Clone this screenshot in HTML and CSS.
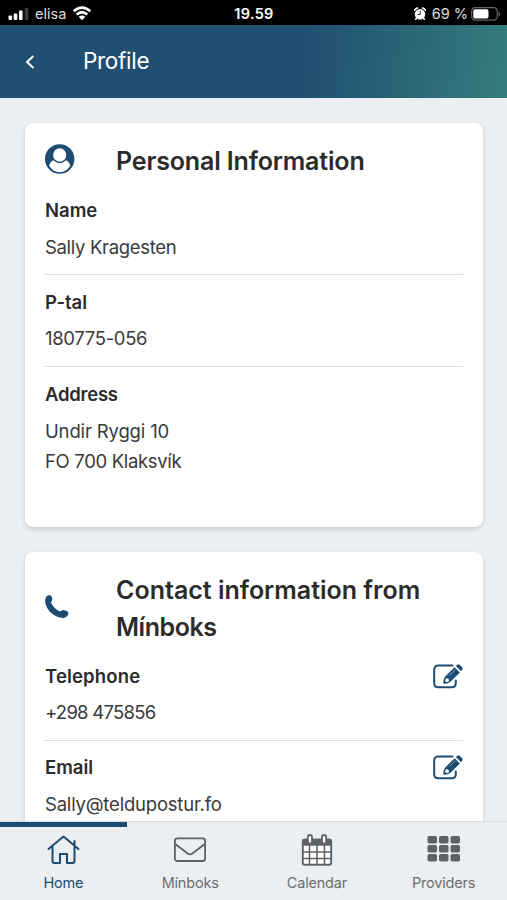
FILE: index.html
```html
<!DOCTYPE html>
<html lang="en">
<head>
<meta charset="utf-8">
<meta name="viewport" content="width=device-width">
<title>Profile</title>
<link rel="stylesheet" href="styles.css">
</head>
<body>
<div class="app">
  <div class="status">
    <div class="status-left">
      <svg class="signal" width="22" height="14" viewBox="0 0 22 14"><rect x="0.5" y="8.5" width="3.6" height="4.5" rx="1" fill="#fff"/><rect x="5.7" y="6.5" width="3.6" height="6.5" rx="1" fill="#fff"/><rect x="11" y="3.5" width="3.6" height="9.5" rx="1" fill="#fff"/><rect x="16.7" y="1" width="3.6" height="12" rx="1" fill="#3a3a3a"/></svg>
      <span class="carrier">elisa</span>
      <svg class="wifi" width="20" height="15" viewBox="0 0 20 15"><path d="M1.7 5.2Q10 -2 18.3 5.2M4.7 8.6Q10 3.9 15.3 8.6" fill="none" stroke="#fff" stroke-width="2.7"/><path d="M6.7 10.8Q10 8.2 13.3 10.8L10 14.3Z" fill="#fff"/></svg>
    </div>
    <span class="time">19.59</span>
    <div class="status-right">
      <svg class="alarm" width="12" height="14" viewBox="0 0 12 14"><path d="M.3 4.2A3 3 0 0 1 4.3 1M11.7 4.2A3 3 0 0 0 7.7 1" fill="#fff" stroke="#fff"/><circle cx="6" cy="7.2" r="5.2" fill="#fff"/><path d="M2.5 11 1.4 12.8M9.5 11l1.1 1.8" stroke="#fff" stroke-width="1.6"/><path d="M6.2 4.2v3.4H3.6" fill="none" stroke="#222" stroke-width="1"/></svg>
      <span class="percent">69 %</span>
      <svg class="battery" width="30" height="14" viewBox="0 0 30 14"><rect x=".7" y=".7" width="25.6" height="12.4" rx="3.6" fill="none" stroke="#666" stroke-width="1.2"/><rect x="2.3" y="2.3" width="15.2" height="9.2" rx="1.8" fill="#fff"/><path d="M27.6 4.6q3 2.4 0 4.8z" fill="#666"/></svg>
    </div>
  </div>
  <header class="header">
    <svg class="back" width="10" height="14" viewBox="0 0 10 14"><path d="M8.4 1 2 7l6.4 6" fill="none" stroke="#fff" stroke-width="2"/></svg>
    <h1 class="page-title">Profile</h1>
  </header>
  <main class="content">
    <section class="card card-personal">
      <div class="card-head">
        <div class="card-icon">
          <svg class="person" width="30" height="30" viewBox="0 0 30 30"><circle cx="14.7" cy="15" r="14.7" fill="#1d4c73"/><path d="M4.2 21.6C5 18 7.5 16.2 10.3 15.6h8.8c2.8.6 5.3 2.4 6.1 6C23 25.8 19.3 28.2 14.7 28.2S6.4 25.8 4.2 21.6Z" fill="#fff"/><ellipse cx="14.7" cy="11" rx="7.3" ry="7.5" fill="#fff" stroke="#1d4c73" stroke-width="1.5"/></svg>
        </div>
        <h2 class="card-title snug">Personal Information</h2>
      </div>
      <div class="row"><div class="label">Name</div><div class="value">Sally Kragesten</div></div>
      <div class="row"><div class="label">P-tal</div><div class="value">180775-056</div></div>
      <div class="row"><div class="label snug">Address</div><div class="value"><span class="street">Undir Ryggi 10</span><br>FO 700 Klaksvík</div></div>
    </section>
    <section class="card">
      <div class="card-head">
        <div class="card-icon">
          <svg class="phone" width="24" height="24" viewBox="0 0 24 24"><path d="M1 2.3C2.5-.3 6.2-.2 6.8 2.1c.5 1.5.8 2.9 0 3.8L5.9 7.5c1.7 3.9 4.9 7.3 9.3 8.9l1.5-.9c1-.9 2.2-.6 3.6 0 1.6.6 3.3 1.2 3.1 2.900-.3 3-3.700 4.900-7.300 4.400C7.800 21.500 1.200 14.300.2 7.300 0 5.400.1 3.800 1 2.300Z" fill="#1d4c73"/></svg>
        </div>
        <h2 class="card-title">Contact information from <span class="brand">Mínboks</span></h2>
      </div>
      <div class="row"><div class="label loose">Telephone<svg class="edit" width="30" height="25" viewBox="0 0 30 25"><path d="M19.5 1.6H5.2Q1.2 1.6 1.2 5.6V19.2Q1.2 23.2 5.2 23.2H18.8Q22.8 23.2 22.8 19.2V16.5" fill="none" stroke="#1d4c73" stroke-width="2" stroke-linecap="round"/><path d="M21.6 3.2 26.9 8.5 17.2 18.1Q14.5 20 10.3 19.6 10.2 15.3 12 12.8ZM22.9 2.1 24.4.8Q25.6-.2 26.9.9L29 3Q30.2 4.3 29.2 5.5L28 7.2Z" fill="#1d4c73"/><circle cx="14" cy="16.2" r="1.9" fill="#fff"/><path d="m16.5 11.5 6-6" stroke="#a9bccb" stroke-width=".7"/></svg></div><div class="value number">+298 475856</div></div>
      <div class="row"><div class="label">Email<svg class="edit" width="30" height="25" viewBox="0 0 30 25"><path d="M19.5 1.6H5.2Q1.2 1.6 1.2 5.6V19.2Q1.2 23.2 5.2 23.2H18.8Q22.8 23.2 22.8 19.2V16.5" fill="none" stroke="#1d4c73" stroke-width="2" stroke-linecap="round"/><path d="M21.6 3.2 26.9 8.5 17.2 18.1Q14.5 20 10.3 19.6 10.2 15.3 12 12.8ZM22.9 2.1 24.4.8Q25.6-.2 26.9.9L29 3Q30.2 4.3 29.2 5.5L28 7.2Z" fill="#1d4c73"/><circle cx="14" cy="16.2" r="1.9" fill="#fff"/><path d="m16.5 11.5 6-6" stroke="#a9bccb" stroke-width=".7"/></svg></div><div class="value email">Sally@teldupostur.fo</div></div>
    </section>
  </main>
  <nav class="tabs">
    <a class="tab tab-active"><svg class="tab-icon" width="34" height="32" viewBox="0 0 34 32"><path d="M2.500 15 17.500 2.500 32.500 15M6.500 12.500v14.500Q6.500 29 8.500 29H14v-9h7v9h5.500q2 0 2-2V7" fill="none" stroke="currentColor" stroke-width="2" stroke-linecap="round" stroke-linejoin="round"/></svg><span>Home</span></a>
    <a class="tab"><svg class="tab-icon" width="34" height="32" viewBox="0 0 34 32"><rect x="1.9" y="4.4" width="30.2" height="22.6" rx="2.5" fill="none" stroke="currentColor" stroke-width="1.8"/><path d="m2.2 10 12.500 9.500q2.300 1.600 4.600 0l12.500-9.500" fill="none" stroke="currentColor" stroke-width="1.8"/></svg><span>Mínboks</span></a>
    <a class="tab"><svg class="tab-icon" width="34" height="32" viewBox="0 0 34 32"><rect x="2.8" y="5.8" width="28.4" height="25" rx="2" fill="#fff" stroke="currentColor" stroke-width="1.9"/><path d="M4 4.8h26q1.5 0 1.5 1.5v5.5h-29V6.3Q2.5 4.8 4 4.8z" fill="currentColor"/><path d="M9.5 11v20M17 11v20M24.5 11v20M3 18h28M3 24.5h28" stroke="currentColor" stroke-width="1.5"/><rect x="7.8" y="1" width="4.2" height="8.5" rx="2.1" fill="#fff" stroke="currentColor" stroke-width="1.8"/><rect x="22" y="1" width="4.2" height="8.5" rx="2.1" fill="#fff" stroke="currentColor" stroke-width="1.8"/></svg><span>Calendar</span></a>
    <a class="tab"><svg class="tab-icon" width="34" height="32" viewBox="0 0 34 32"><g fill="currentColor"><rect x="0.5" y="2" width="9.5" height="7.4" rx="1.7"/><rect x="12" y="2" width="9.5" height="7.4" rx="1.7"/><rect x="23.5" y="2" width="9.5" height="7.4" rx="1.7"/><rect x="0.5" y="11" width="9.5" height="7.4" rx="1.7"/><rect x="12" y="11" width="9.5" height="7.4" rx="1.7"/><rect x="23.5" y="11" width="9.5" height="7.4" rx="1.7"/><rect x="0.5" y="20" width="9.5" height="7.4" rx="1.7"/><rect x="12" y="20" width="9.5" height="7.4" rx="1.7"/><rect x="23.5" y="20" width="9.5" height="7.4" rx="1.7"/></g></svg><span>Providers</span></a>
  </nav>
</div>
</body>
</html>
```
FILE: styles.css
```css
* { box-sizing: border-box; }
body { margin: 0; font-family: Inter, sans-serif; color: #2b2b2b; }
h1, h2 { margin: 0; }
svg { display: block; flex: none; }

.app { height: 900px; display: flex; flex-direction: column; overflow: hidden; background: #ebeff2; }

.status { height: 25px; flex: none; background: #000; color: #ddd; display: grid; grid-template-columns: 1fr auto 1fr; align-items: center; padding: 2px 6px 0 8px; font-size: 14.5px; }
.status-left, .status-right { display: flex; align-items: center; }
.status-right { justify-content: flex-end; }
.carrier { margin: 0 6px 0 5px; }
.time { margin-right: 1px; color: #fff; font-weight: 600; letter-spacing: .3px; }
.percent { margin: 0 3px 0 6px; }

.header { height: 73px; flex: none; display: flex; align-items: center; padding-left: 25px; background: linear-gradient(95deg, #214f72 0%, #214f72 60%, #357d7d 100%); color: #fff; }
.page-title { margin: -2px 0 0 48px; font-size: 22.5px; font-weight: 400; letter-spacing: -.3px; }

.content { flex: 1; min-height: 0; overflow: hidden; padding: 25px 24px 0 25px; display: flex; flex-direction: column; gap: 25px; }
.card { flex: none; background: #fff; border-radius: 8px; padding: 20px; box-shadow: 0 2px 4px rgba(0, 0, 0, .17); }
.card-personal { height: 404px; }
.card-head { display: flex; align-items: center; margin-bottom: 4.4px; }
.card-icon { width: 71px; flex: none; padding-bottom: 4px; }
.card-title { font-size: 25px; line-height: 36.5px; font-weight: 600; }
.card-title.snug { letter-spacing: -.15px; }
.brand { letter-spacing: -.45px; }
.row { padding: 11.5px 0 12px; border-bottom: 1px solid #dcdddf; }
.row:last-child { border-bottom: 0; }
.card-personal .row:last-child { padding-top: 12.5px; }
.label { display: flex; justify-content: space-between; align-items: center; margin-bottom: 6px; font-size: 18.5px; font-weight: 600; line-height: 30.5px; }
.label.snug { letter-spacing: -.25px; }
.label.loose { letter-spacing: .15px; }
.value { font-size: 18.5px; line-height: 30.5px; letter-spacing: -.33px; color: #3a3a3a; }
.value.number { letter-spacing: -.75px; }
.value.email { letter-spacing: -.2px; }
.street { letter-spacing: -.15px; }

.tabs { flex: none; height: 79px; display: grid; grid-template-columns: repeat(4, 1fr); border-top: 1px solid #d9dcde; background: #ebeff2; }
.tab { display: flex; flex-direction: column; align-items: center; padding-top: 7px; border-top: 5px solid transparent; color: #6b6e71; font-size: 14.5px; line-height: 20px; letter-spacing: -.2px; }
.tab-active { color: #1d4c73; border-top-color: #1d4c73; }
.tab-icon { margin-bottom: 7px; color: #5f6265; }
.tab-active .tab-icon { color: #1d4c73; }
```
